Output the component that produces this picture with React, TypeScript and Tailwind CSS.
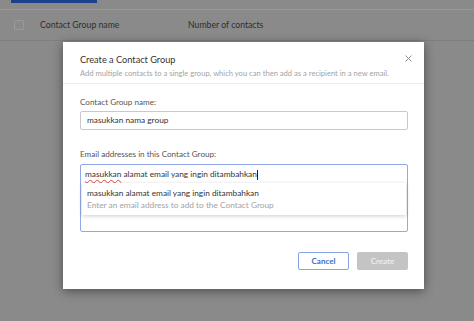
import React from 'react';

const font = { fontFamily: 'Lato, "Open Sans", sans-serif' };

export default function App() {
  return (
    <div className="relative w-[474px] h-[321px] overflow-hidden bg-[#8a8a8a]" style={font}>
      {/* page behind the overlay */}
      <div className="flex flex-col">
        <div className="h-[10px] border-b border-[#979797] pl-[11px]">
          <div className="w-[86px] h-[3px] bg-[#1e3f8a]" />
        </div>
        <div className="h-[31px] flex items-center border-b border-[#7e7e7e] text-[8.7px] text-[#2e2e2e]">
          <div className="ml-[14px] w-[10px] h-[10px] border border-[#9a9a9a] rounded-[1px]" />
          <span className="ml-[16px] w-[148px]">Contact Group name</span>
          <span>Number of contacts</span>
        </div>
      </div>

      {/* dialog */}
      <div className="absolute left-[63px] top-[42px] w-[361px] h-[247px] bg-white shadow-[0_2px_10px_rgba(0,0,0,0.45)] flex flex-col">
        <div className="relative h-[42px] border-b border-[#ececec] pl-[17px] pt-[12px]">
          <div className="text-[9.2px] leading-[12px] text-[#333]">Create a Contact Group</div>
          <div className="text-[7.6px] leading-[11px] text-[#a3a3a3] mt-[2px]">
            Add multiple contacts to a single group, which you can then add as a recipient in a new email.
          </div>
          <svg className="absolute right-[12px] top-[13px]" width="7" height="7" viewBox="0 0 7 7">
            <path d="M0.5 0.5 L6.5 6.5 M6.5 0.5 L0.5 6.5" stroke="#8c8c8c" strokeWidth="1" />
          </svg>
        </div>

        <div className="pl-[17px] pr-[16px] pt-[13px] flex flex-col">
          <div className="text-[8.1px] leading-[11px] text-[#555]">Contact Group name:</div>
          <div className="mt-[3px] h-[19px] border border-[#c9c9c9] rounded-[2px] flex items-center px-[6px] text-[8.3px] text-[#333]">
            masukkan nama group
          </div>

          <div className="mt-[19px] text-[8.1px] leading-[11px] text-[#555]">Email addresses in this Contact Group:</div>
          <div className="relative mt-[4px] h-[68px] border border-[#91a8e4] rounded-[2px]">
            <div className="h-[19px] flex items-center px-[4px] text-[8.3px] text-[#333]">
              <span className="underline decoration-wavy decoration-[#e04848] decoration-[0.5px] underline-offset-[2px]">masukkan</span>
              <span className="whitespace-pre"> alamat email yang ingin ditambahkan</span>
              <span className="w-px h-[10px] bg-[#222]" />
            </div>
            <div className="absolute left-[1px] right-[1px] top-[18px] h-[32px] bg-white shadow-[0_1px_4px_rgba(0,0,0,0.2)] px-[5px] pt-[4px] flex flex-col">
              <span className="text-[8.3px] leading-[12px] text-[#333]">masukkan alamat email yang ingin ditambahkan</span>
              <span className="text-[8.3px] leading-[12px] text-[#a3a3a3]">Enter an email address to add to the Contact Group</span>
            </div>
          </div>

          <div className="mt-[20px] flex justify-end gap-[8px]">
            <div className="w-[51px] h-[18px] border border-[#86a3e2] rounded-[2px] flex items-center justify-center text-[8px] font-bold text-[#3d6cc9]">
              Cancel
            </div>
            <div className="w-[51px] h-[18px] bg-[#c4c4c4] rounded-[2px] flex items-center justify-center text-[8px] font-bold text-[#ececec]">
              Create
            </div>
          </div>
        </div>
      </div>
    </div>
  );
}
